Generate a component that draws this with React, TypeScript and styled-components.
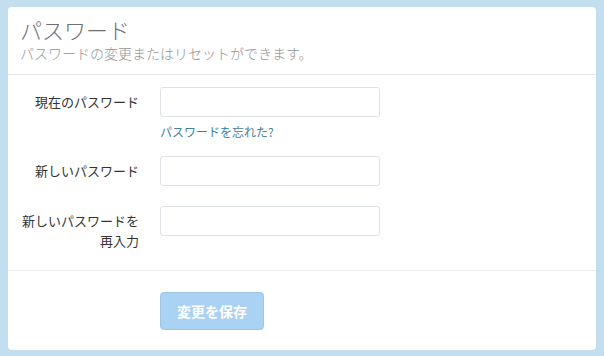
import React from 'react'
import styled, { createGlobalStyle } from 'styled-components'

const GlobalStyle = createGlobalStyle`
  html, body {
    margin: 0;
    padding: 0;
    background: #c2deef;
  }
  body {
    font-family: "Noto Sans CJK JP", "Noto Sans", "Liberation Sans", sans-serif;
  }
`

const Page = styled.div`
  padding: 7px 8px 6px 8px;
`

const Card = styled.div`
  background: #ffffff;
  border-radius: 4px;
  height: 343px;
  display: flex;
  flex-direction: column;
  overflow: hidden;
`

const Header = styled.div`
  padding: 9px 12px 12px 12px;
  border-bottom: 1px solid #e6e6e6;
`

const Title = styled.h1`
  margin: 0;
  font-size: 22px;
  line-height: 26px;
  font-weight: 300;
  color: #707070;
`

const Subtitle = styled.p`
  margin: 2px 0 0 0;
  font-size: 14px;
  line-height: 18px;
  font-weight: 300;
  color: #949494;
`

const Body = styled.div`
  padding: 12px 0 19px 0;
  display: flex;
  flex-direction: column;
  border-bottom: 1px solid #ececec;
`

const Row = styled.div<{ $gap: number }>`
  display: grid;
  grid-template-columns: 131px 220px;
  column-gap: 21px;
  margin-top: ${({ $gap }) => $gap}px;
`

const Label = styled.label`
  padding-top: 5px;
  text-align: right;
  font-size: 13px;
  line-height: 20px;
  color: #333333;
`

const Field = styled.div`
  display: flex;
  flex-direction: column;
`

const Input = styled.input`
  box-sizing: border-box;
  width: 220px;
  height: 30px;
  border: 1px solid #dde2e6;
  border-radius: 3px;
  background: #ffffff;
  padding: 4px 8px;
  font-size: 13px;
  outline: none;
`

const ForgotLink = styled.a`
  margin-top: 6px;
  font-size: 12px;
  line-height: 18px;
  color: #3f83a0;
  text-decoration: none;
`

const Footer = styled.div`
  padding: 21px 0 0 152px;
`

const SaveButton = styled.button`
  width: 104px;
  height: 38px;
  border: 1px solid #9cc6e8;
  border-radius: 4px;
  background: #a9d2f3;
  color: #ffffff;
  font-family: inherit;
  font-size: 14px;
  font-weight: 700;
  cursor: not-allowed;
`

export default function App() {
  return (
    <>
      <GlobalStyle />
      <Page>
        <Card>
          <Header>
            <Title>パスワード</Title>
            <Subtitle>パスワードの変更またはリセットができます。</Subtitle>
          </Header>
          <Body>
            <Row $gap={0}>
              <Label>現在のパスワード</Label>
              <Field>
                <Input type="password" />
                <ForgotLink href="#">パスワードを忘れた?</ForgotLink>
              </Field>
            </Row>
            <Row $gap={15}>
              <Label>新しいパスワード</Label>
              <Field>
                <Input type="password" />
              </Field>
            </Row>
            <Row $gap={20}>
              <Label>
                新しいパスワードを
                <br />
                再入力
              </Label>
              <Field>
                <Input type="password" />
              </Field>
            </Row>
          </Body>
          <Footer>
            <SaveButton disabled>変更を保存</SaveButton>
          </Footer>
        </Card>
      </Page>
    </>
  )
}
